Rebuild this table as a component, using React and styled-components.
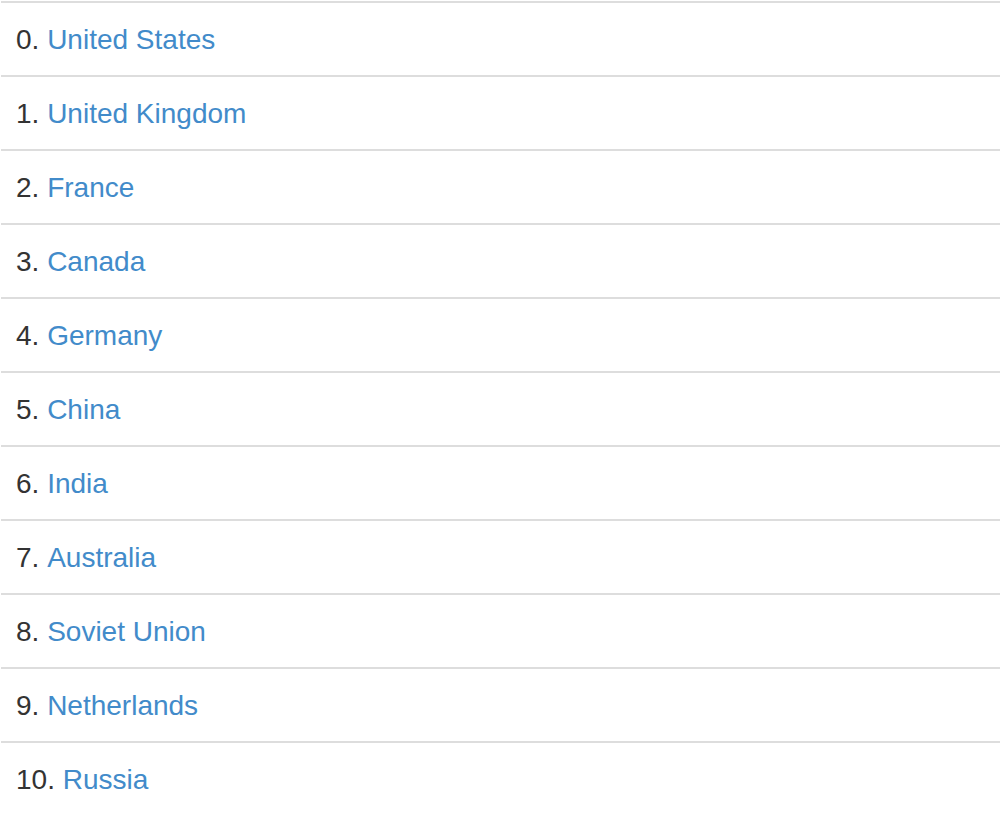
import React from "react";
import styled, { createGlobalStyle } from "styled-components";

const Global = createGlobalStyle`
  html, body { margin: 0; padding: 0; background: #fff; }
  body { font-family: "Liberation Sans", Arial, Helvetica, sans-serif; }
`;

const List = styled.ul`
  list-style: none;
  margin: 1px 0 0 1px;
  padding: 0;
`;

const Item = styled.li`
  border-top: 2px solid #dddddd;
  height: 74px;
  box-sizing: border-box;
  display: flex;
  align-items: center;
  padding: 2px 14px 0 15px;
  font-size: 28px;
  color: #333333;
  white-space: pre;
`;

const Link = styled.a`
  color: #428bca;
  text-decoration: none;
`;

const countries = [
  "United States",
  "United Kingdom",
  "France",
  "Canada",
  "Germany",
  "China",
  "India",
  "Australia",
  "Soviet Union",
  "Netherlands",
  "Russia",
];

export default function App() {
  return (
    <>
      <Global />
      <List>
        {countries.map((c, i) => (
          <Item key={c}>
            {`${i}. `}
            <Link href="#">{c}</Link>
          </Item>
        ))}
      </List>
    </>
  );
}
